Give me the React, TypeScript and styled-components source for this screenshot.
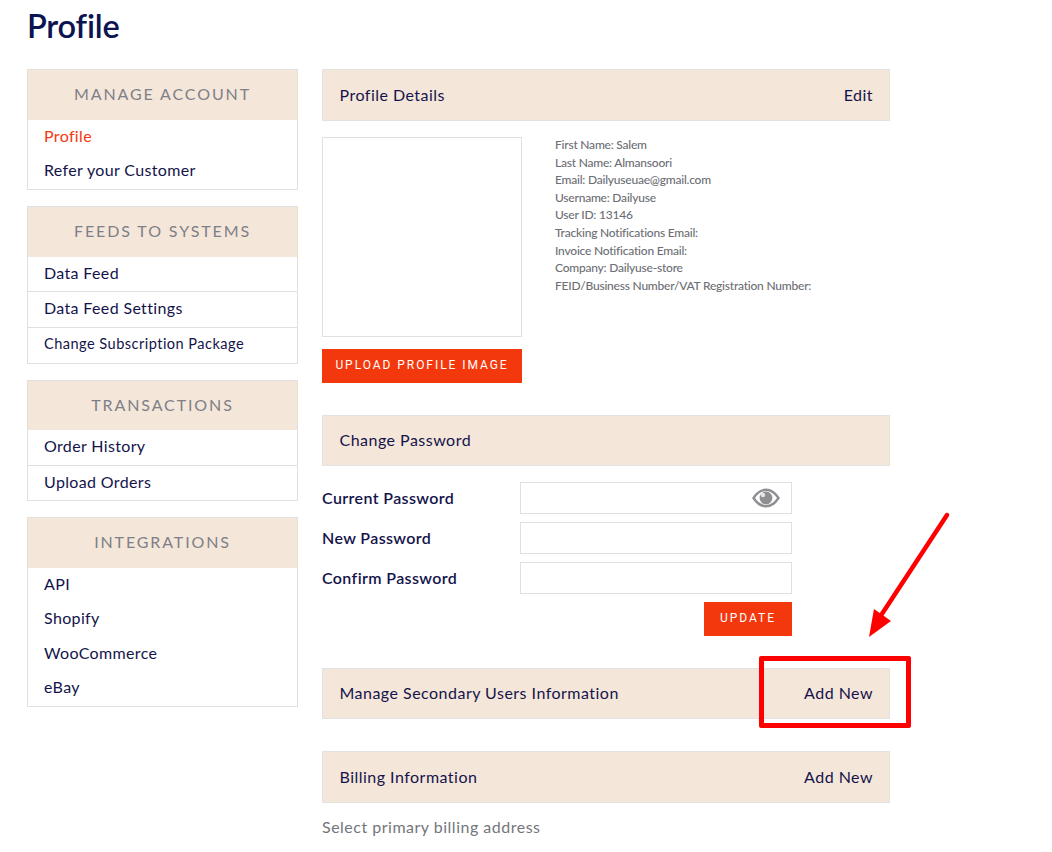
import React from "react";
import styled, { createGlobalStyle } from "styled-components";

const Global = createGlobalStyle`
  html, body { margin: 0; padding: 0; background: #fff; }
  body { font-family: "Lato", "Noto Sans", sans-serif; color: #14144a; overflow: hidden; }
  * { box-sizing: border-box; }
`;

const Page = styled.div`
  position: relative;
  width: 1052px;
  height: 852px;
  padding: 0 27px;
  overflow: hidden;
`;

const Title = styled.h1`
  margin: 0;
  height: 69px;
  padding-top: 6px;
  font-size: 32.5px;
  line-height: 40px;
  font-weight: 600;
  letter-spacing: -0.2px;
  color: #0b1450;
`;

const Columns = styled.div`
  display: flex;
  gap: 24px;
  align-items: flex-start;
`;

const Sidebar = styled.aside`
  width: 271px;
  display: flex;
  flex-direction: column;
  gap: 16px;
`;

const Panel = styled.section`
  border: 1px solid #e0e0e0;
`;

const PanelHead = styled.h2<{ $h: number }>`
  margin: 0;
  height: ${(p) => p.$h}px;
  padding-bottom: 3px;
  background: #f5e6da;
  display: flex;
  align-items: center;
  justify-content: center;
  font-size: 16px;
  font-weight: 400;
  letter-spacing: 1.88px;
  color: #7d8087;
`;

const NavItem = styled.a<{ $active?: boolean; $line?: boolean; $h: number; $small?: boolean }>`
  display: flex;
  align-items: center;
  height: ${(p) => p.$h}px;
  padding: 0 0 4px 16px;
  font-size: ${(p) => (p.$small ? 14.6 : 16)}px;
  letter-spacing: ${(p) => (p.$small ? 0.45 : 0.35)}px;
  color: ${(p) => (p.$active ? "#f4380e" : "#14144a")};
  border-top: ${(p) => (p.$line ? "1px solid #e0e0e0" : "none")};
`;

const Main = styled.main`
  width: 568px;
  display: flex;
  flex-direction: column;
`;

const Bar = styled.div<{ $h: number; $mt?: number }>`
  height: ${(p) => p.$h}px;
  margin-top: ${(p) => p.$mt ?? 0}px;
  background: #f5e6da;
  border: 1px solid #e2e2e2;
  padding: 0 16px 2px 16.500px;
  display: flex;
  align-items: center;
  justify-content: space-between;
  font-size: 16px;
  letter-spacing: 0.48px;
  color: #14144a;
`;

const DetailsRow = styled.div`
  display: flex;
  margin-top: 16px;
`;

const ImageCol = styled.div`
  width: 200px;
  display: flex;
  flex-direction: column;
  gap: 12px;
`;

const ImageBox = styled.div`
  height: 200px;
  border: 1px solid #e0e0e0;
`;

const Button = styled.button<{ $w: number; $spacing: number }>`
  width: ${(p) => p.$w}px;
  height: 34px;
  border: none;
  padding: 0 0 2px;
  background: #f4380e;
  color: #fff;
  font-family: "Roboto", sans-serif;
  font-size: 12px;
  font-weight: 400;
  letter-spacing: ${(p) => p.$spacing}px;
  text-transform: uppercase;
`;

const Info = styled.div`
  margin-left: 33px;
  margin-top: -1px;
  font-size: 12px;
  line-height: 17.6px;
  font-weight: 500;
  letter-spacing: -0.22px;
  color: #6d6f75;
`;

const InfoLine = styled.div`
  white-space: nowrap;
`;

const Form = styled.div`
  margin-top: 16px;
  width: 470px;
  display: flex;
  flex-direction: column;
  gap: 8px;
`;

const FieldRow = styled.div`
  display: flex;
  align-items: center;
  height: 32px;
`;

const FieldLabel = styled.label`
  width: 198px;
  padding-bottom: 2px;
  font-size: 16px;
  font-weight: 600;
  letter-spacing: 0.38px;
  color: #14144a;
`;

const InputBox = styled.div`
  position: relative;
  width: 272px;
  height: 32px;
  border: 1px solid #e0e0e0;
`;

const EyeIcon = styled.svg`
  position: absolute;
  right: 11px;
  top: 5px;
  width: 28px;
  height: 20px;
`;

const FormActions = styled.div`
  display: flex;
  justify-content: flex-end;
`;

const Hint = styled.p`
  margin: 15px 0 0;
  font-size: 16px;
  line-height: 18px;
  letter-spacing: 0.5px;
  color: #74767c;
`;

const Annotation = styled.svg`
  position: absolute;
  left: 860px;
  top: 505px;
  width: 100px;
  height: 140px;
`;

const Highlight = styled.div`
  position: absolute;
  left: 759px;
  top: 656px;
  width: 152px;
  height: 72px;
  border: 5px solid #ff0000;
  border-radius: 2px;
`;

const nav = [
  { title: "MANAGE ACCOUNT", h: 50, items: [["Profile", 34, false], ["Refer your Customer", 35, false]] },
  { title: "FEEDS TO SYSTEMS", h: 50, items: [["Data Feed", 34, false], ["Data Feed Settings", 36, true], ["Change Subscription Package", 36, true]] },
  { title: "TRANSACTIONS", h: 49, items: [["Order History", 35, false], ["Upload Orders", 35, true]] },
  { title: "INTEGRATIONS", h: 50, items: [["API", 34, false], ["Shopify", 35, false], ["WooCommerce", 34, false], ["eBay", 35, false]] },
] as const;

const info = [
  "First Name: Salem",
  "Last Name: Almansoori",
  "Email: Dailyuseuae@gmail.com",
  "Username: Dailyuse",
  "User ID: 13146",
  "Tracking Notifications Email:",
  "Invoice Notification Email:",
  "Company: Dailyuse-store",
  "FEID/Business Number/VAT Registration Number:",
];

export default function App() {
  return (
    <Page>
      <Global />
      <Title>Profile</Title>
      <Columns>
        <Sidebar>
          {nav.map((group) => (
            <Panel key={group.title}>
              <PanelHead $h={group.h}>{group.title}</PanelHead>
              {group.items.map(([label, h, line]) => (
                <NavItem
                  key={label}
                  $h={h}
                  $line={line}
                  $active={label === "Profile"}
                  $small={label === "Change Subscription Package"}
                >
                  {label}
                </NavItem>
              ))}
            </Panel>
          ))}
        </Sidebar>
        <Main>
          <Bar $h={52}>
            <span>Profile Details</span>
            <span>Edit</span>
          </Bar>
          <DetailsRow>
            <ImageCol>
              <ImageBox />
              <Button $w={200} $spacing={1.95}>Upload Profile Image</Button>
            </ImageCol>
            <Info>
              {info.map((line) => (
                <InfoLine key={line}>{line}</InfoLine>
              ))}
            </Info>
          </DetailsRow>
          <Bar $h={51} $mt={32}>
            <span>Change Password</span>
          </Bar>
          <Form>
            <FieldRow>
              <FieldLabel>Current Password</FieldLabel>
              <InputBox>
                <EyeIcon viewBox="0 0 28 20">
                  <path
                    d="M1.500 10C5 4.600 9 1.800 14 1.800s9 2.800 12.500 8.200C23 15.400 19 18.200 14 18.200S5 15.400 1.500 10Z"
                    fill="none"
                    stroke="#8f8f93"
                    strokeWidth="2.400"
                  />
                  <circle cx="14" cy="10" r="6.400" fill="#8f8f93" />
                  <circle cx="11" cy="7" r="2.200" fill="#e4e4e6" />
                </EyeIcon>
              </InputBox>
            </FieldRow>
            <FieldRow>
              <FieldLabel>New Password</FieldLabel>
              <InputBox />
            </FieldRow>
            <FieldRow>
              <FieldLabel>Confirm Password</FieldLabel>
              <InputBox />
            </FieldRow>
            <FormActions>
              <Button $w={88} $spacing={1.95}>Update</Button>
            </FormActions>
          </Form>
          <Bar $h={51} $mt={32}>
            <span>Manage Secondary Users Information</span>
            <span>Add New</span>
          </Bar>
          <Bar $h={52} $mt={32}>
            <span>Billing Information</span>
            <span>Add New</span>
          </Bar>
          <Hint>Select primary billing address</Hint>
        </Main>
      </Columns>
      <Annotation viewBox="0 0 100 140">
        <path d="M87 10 L16 118" stroke="#ff0000" strokeWidth="4.500" strokeLinecap="round" />
        <path d="M9 132 L14 104 L31 116 Z" fill="#ff0000" />
      </Annotation>
      <Highlight />
    </Page>
  );
}
